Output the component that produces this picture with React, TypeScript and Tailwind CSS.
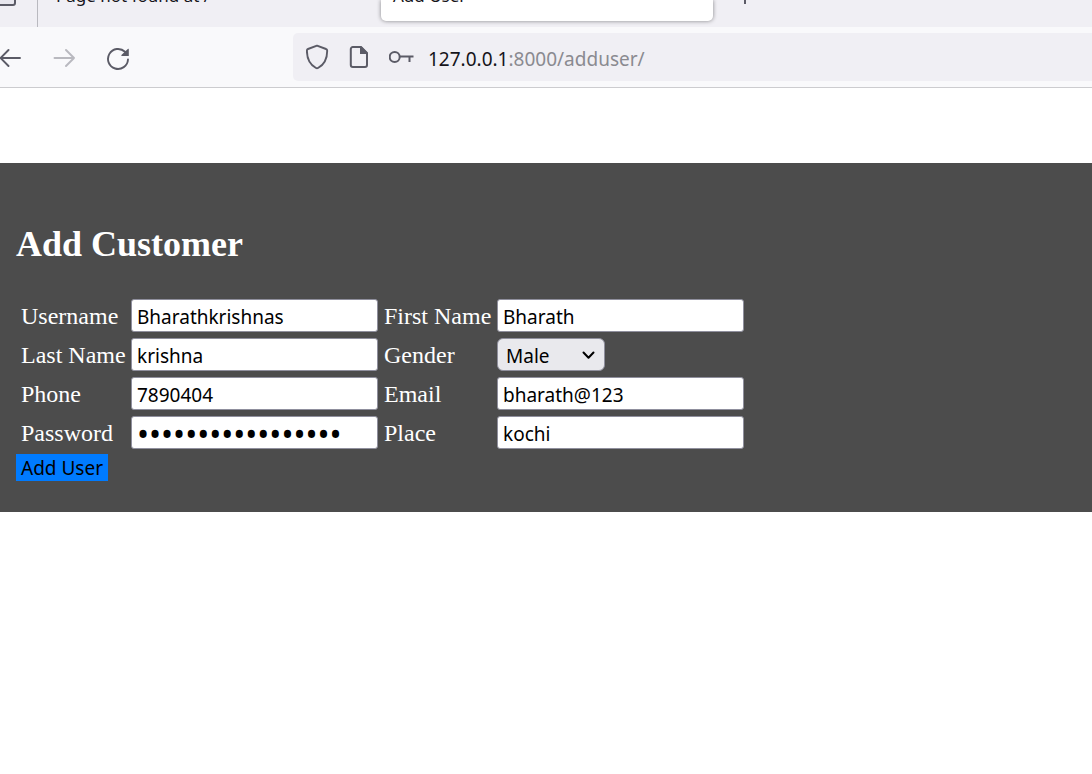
import React from "react";

const sans = "font-['Noto_Sans','Open_Sans',sans-serif]";
const fieldBox =
  "h-[33px] w-full rounded-[3px] border border-[#8f8f9d] bg-white px-[5px] pt-0.5 leading-6 text-black outline-none";

type FieldProps = {
  id: string;
  label: string;
  value: string;
  type?: string;
};

function Field({ id, label, value, type = "text" }: FieldProps) {
  return (
    <>
      <label htmlFor={id} className="whitespace-nowrap">
        {label}
      </label>
      <input
        id={id}
        name={id}
        type={type}
        defaultValue={value}
        className={`${fieldBox} ${sans} ${type === "password" ? "text-[32px]" : "text-[19px]"}`}
      />
    </>
  );
}

function TabStrip() {
  return (
    <div className="flex h-[27px] items-end overflow-hidden bg-[#f0eff4]">
      <div className="flex w-[38px] shrink-0 self-stretch border-r border-[#b9b9bf]">
        <svg width="20" height="8" viewBox="0 0 20 8" fill="#e8e7ee" stroke="#5b5b66" strokeWidth="2">
          <path d="M-4 -4H15V3a2 2 0 0 1-2 2H-4Z" />
        </svg>
      </div>
      <a href="#" className="w-[343px] shrink-0 pb-[19px] pl-[18px] text-[17px] leading-6 text-[#15141a]">
        Page not found at /
      </a>
      <div className="self-stretch pb-[6px]">
        <a
          href="#"
          className="flex h-full w-[332px] shrink-0 items-end rounded-b-[5px] bg-white pb-[13px] pl-3 text-[17px] leading-6 text-[#15141a] shadow-[0_0_4px_rgba(0,0,0,0.45)]"
        >
          Add User
        </a>
      </div>
      <button type="button" aria-label="New tab" className="ml-[23px] self-start">
        <svg width="18" height="6" viewBox="0 0 18 6" stroke="#5b5b66" strokeWidth="2">
          <path d="M9 0V4" />
        </svg>
      </button>
    </div>
  );
}

function Toolbar() {
  return (
    <div className="flex h-[61px] items-center border-b border-[#cccccf] bg-[#f9f9fb]">
      <button type="button" aria-label="Back">
        <svg width="22" height="22" viewBox="0 0 22 22" fill="none" stroke="#5b5b66" strokeWidth="1.9" strokeLinecap="round" strokeLinejoin="round">
          <path d="M20 12H0.5M8.500 4L0.500 12L8.500 20" />
        </svg>
      </button>
      <button type="button" aria-label="Forward" className="ml-[31px]">
        <svg width="22" height="22" viewBox="0 0 22 22" fill="none" stroke="#b9b9bf" strokeWidth="1.9" strokeLinecap="round" strokeLinejoin="round">
          <path d="M1.500 12H21M13 4L21 12L13 20" />
        </svg>
      </button>
      <button type="button" aria-label="Reload" className="ml-[31px]">
        <svg width="24" height="26" viewBox="0 0 24 26" fill="none">
          <path d="M22 15.500A10 10 0 1 1 19 7.800" stroke="#5b5b66" strokeWidth="1.900" strokeLinecap="round" />
          <path d="M22.800 5.300V12H15.800a.6.6 0 0 1-.4-1L21.800 4.900a.6.6 0 0 1 1 .4Z" fill="#5b5b66" />
        </svg>
      </button>
      <div className="ml-[163px] flex h-12 flex-1 items-center rounded-l-[5px] bg-[#f0eff4] pl-[13px]">
        <svg width="23" height="26" viewBox="0 0 23 26" fill="none" stroke="#5b5b66" strokeWidth="1.900" strokeLinejoin="round">
          <path d="M11 1.600L20 5Q21.200 5.400 21.200 6.700C21.200 14.400 18 20.700 12 24Q11 24.600 10 24C4 20.700 .9 14.400 .9 6.700Q.9 5.400 2 5Z" />
        </svg>
        <svg className="ml-5" width="20" height="24" viewBox="0 0 20 24" fill="none">
          <path d="M12 2H3.800A2 2 0 0 0 1.800 4V20A2 2 0 0 0 3.800 22H16A2 2 0 0 0 18 20V8Z" stroke="#5b5b66" strokeWidth="2" strokeLinejoin="round" />
          <path d="M11 1.500V9H18.700V8L12.500 1.500Z" fill="#5b5b66" />
        </svg>
        <svg className="ml-5" width="25" height="16" viewBox="0 0 25 16" fill="none" stroke="#5b5b66" strokeWidth="2">
          <circle cx="5.700" cy="8" r="5" />
          <path d="M10.700 7.500H24.500M20.500 7.500V13" />
        </svg>
        <p className="ml-[14px] pt-1 text-[19px] leading-7 text-[#8a8a90]">
          <span className="text-[#15141a]">127.0.0.1</span>:8000/adduser/
        </p>
      </div>
    </div>
  );
}

export default function App() {
  return (
    <div className="min-h-screen bg-white">
      <header className="font-['Noto_Sans','Open_Sans',sans-serif]">
        <TabStrip />
        <Toolbar />
      </header>
      <main className="mt-[75px] bg-[#4c4c4c] px-4 pb-[31px] pt-[60px] font-['Liberation_Serif',serif] text-[24px] leading-7 text-white">
        <h1 className="text-[36px] font-bold leading-[42px]">Add Customer</h1>
        <form className="pt-[34px]" onSubmit={(event) => event.preventDefault()}>
          <div className="grid grid-cols-[104px_247px_107px_247px] items-center gap-1.5 pl-[5px]">
            <Field id="username" label="Username" value="Bharathkrishnas" />
            <Field id="first_name" label="First Name" value="Bharath" />
            <Field id="last_name" label="Last Name" value="krishna" />
            <label htmlFor="gender">Gender</label>
            <div className="grid w-[108px] items-center">
              <select
                id="gender"
                name="gender"
                defaultValue="Male"
                className={`col-start-1 row-start-1 h-[33px] appearance-none rounded-md border border-[#8f8f9d] bg-[#e9e9ed] pl-2 pt-0.5 text-[19px] leading-6 text-black ${sans}`}
              >
                <option>Male</option>
                <option>Female</option>
              </select>
              <svg className="pointer-events-none col-start-1 row-start-1 mr-[9px] justify-self-end" width="14" height="10" viewBox="0 0 14 10" fill="none" stroke="#000" strokeWidth="2" strokeLinecap="round" strokeLinejoin="round">
                <path d="M1.500 2.500L6.500 7.800L11.500 2.500" />
              </svg>
            </div>
            <Field id="phone" label="Phone" value="7890404" />
            <Field id="email" label="Email" value="bharath@123" />
            <Field id="password" label="Password" value="customerpassword1" type="password" />
            <Field id="place" label="Place" value="kochi" />
          </div>
          <button
            type="submit"
            className={`mt-[5px] block h-[27px] bg-[#007bff] px-[5px] pt-0.5 text-[19px] leading-[25px] text-black ${sans}`}
          >
            Add User
          </button>
        </form>
      </main>
    </div>
  );
}
